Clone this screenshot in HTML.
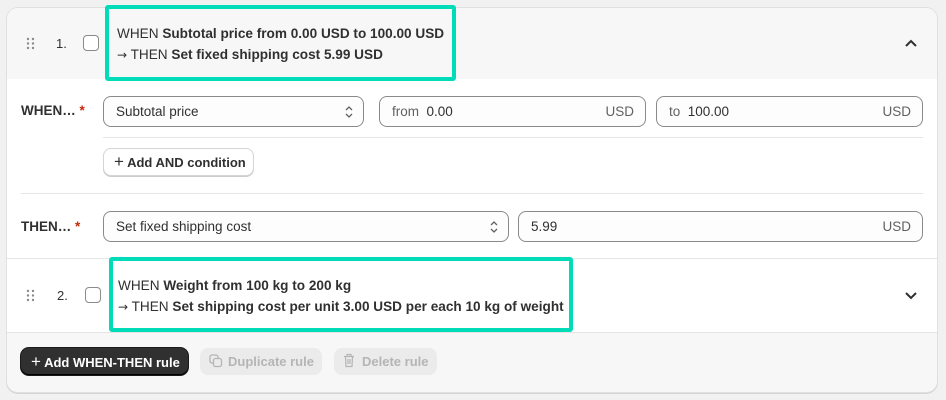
<!DOCTYPE html>
<html><head><meta charset="utf-8"><style>
*{box-sizing:border-box;margin:0;padding:0}
body{width:946px;height:400px;background:#f1f1f1;font-family:"Liberation Sans",sans-serif;font-size:13.5px;color:#303030;position:relative;overflow:hidden}
.a{position:absolute}
.card{left:6px;top:7px;width:932px;height:386px;border:1px solid #e0e0e0;border-radius:12px;background:#fff;overflow:hidden;box-shadow:0 1px 0 #d4d4d4}
.hdr{left:0;top:0;width:932px;height:71px;background:#f7f7f7}
.ftr{left:0;top:324px;width:932px;height:62px;background:#f7f7f7;border-top:1px solid #e3e3e3}
.inp{border:1px solid #8a8a8a;border-radius:8px;height:31px;background:#fdfdfd;line-height:29px;padding-left:12px;font-size:13.5px;color:#303030}
.usd{position:absolute;right:11px;top:0;color:#616161}
.gray{color:#616161}
.cb{width:16px;height:16px;border:1px solid #8a8a8a;border-radius:4px;background:#fff}
.teal{border:4px solid #00dcb8;border-radius:3px}
.ln{line-height:21px;font-size:13.6px;color:#303030;white-space:nowrap}
.ar{font-family:"DejaVu Sans",sans-serif;font-size:12px}
b{font-weight:700}
.hr{height:1px;background:#e6e6e6}
</style></head><body>
<div class="a card">
  <div class="a hdr"></div>
  <div class="a ftr"></div>
</div>
<svg class="a" style="left:26px;top:37px" width="10" height="13"><g fill="#8a8a8a"><circle cx="2" cy="2" r="1.2"/><circle cx="7" cy="2" r="1.2"/><circle cx="2" cy="6.5" r="1.2"/><circle cx="7" cy="6.5" r="1.2"/><circle cx="2" cy="11" r="1.2"/><circle cx="7" cy="11" r="1.2"/></g></svg>
<div class="a" style="left:56px;top:36px;font-size:13px">1.</div>
<div class="a cb" style="left:83px;top:35px"></div>
<div class="a teal" style="left:105px;top:5px;width:351px;height:76px;background:#f7f7f7"></div>
<div class="a ln" style="left:117px;top:23px">WHEN <b>Subtotal price from 0.00 USD to 100.00 USD</b><br><span class="ar">→</span> THEN <b>Set fixed shipping cost 5.99 USD</b></div>
<svg class="a" style="left:904px;top:38px" width="14" height="10"><path d="M2 8L7 3L12 8" fill="none" stroke="#303030" stroke-width="2"/></svg>

<div class="a" style="left:21px;top:103px;font-weight:700">WHEN… <span style="color:#c5280c">*</span></div>
<div class="a inp" style="left:103px;top:96px;width:261px">Subtotal price
<svg class="a" style="right:9px;top:8px" width="10" height="14"><path d="M2 5L5 2L8 5M2 9L5 12L8 9" fill="none" stroke="#616161" stroke-width="1.3"/></svg></div>
<div class="a inp" style="left:379px;top:96px;width:267px"><span class="gray">from</span>&nbsp; 0.00<span class="usd">USD</span></div>
<div class="a inp" style="left:656px;top:96px;width:267px"><span class="gray">to</span>&nbsp; 100.00<span class="usd">USD</span></div>
<div class="a hr" style="left:103px;top:137px;width:820px"></div>
<div class="a" style="left:103px;top:148px;width:151px;height:28px;border:1px solid #d4d4d4;border-radius:8px;background:#fff;box-shadow:0 1px 0 #ccc;font-weight:700;font-size:13px;line-height:26px;padding-left:10px;white-space:nowrap"><span style="font-size:17px;font-weight:400">+</span> Add AND condition</div>
<div class="a hr" style="left:21px;top:193px;width:902px"></div>

<div class="a" style="left:21px;top:219px;font-weight:700">THEN… <span style="color:#c5280c">*</span></div>
<div class="a inp" style="left:103px;top:211px;width:406px">Set fixed shipping cost
<svg class="a" style="right:9px;top:8px" width="10" height="14"><path d="M2 5L5 2L8 5M2 9L5 12L8 9" fill="none" stroke="#616161" stroke-width="1.3"/></svg></div>
<div class="a inp" style="left:518px;top:211px;width:405px">5.99<span class="usd">USD</span></div>
<div class="a hr" style="left:7px;top:258px;width:930px"></div>

<svg class="a" style="left:26px;top:289px" width="10" height="13"><g fill="#8a8a8a"><circle cx="2" cy="2" r="1.2"/><circle cx="7" cy="2" r="1.2"/><circle cx="2" cy="6.5" r="1.2"/><circle cx="7" cy="6.5" r="1.2"/><circle cx="2" cy="11" r="1.2"/><circle cx="7" cy="11" r="1.2"/></g></svg>
<div class="a" style="left:57px;top:288px;font-size:13px">2.</div>
<div class="a cb" style="left:85px;top:287px"></div>
<div class="a teal" style="left:109px;top:257px;width:464px;height:75px;background:#fff"></div>
<div class="a ln" style="left:118px;top:275px">WHEN <b>Weight from 100 kg to 200 kg</b><br><span class="ar">→</span> THEN <b>Set shipping cost per unit 3.00 USD per each 10 kg of weight</b></div>
<svg class="a" style="left:904px;top:291px" width="14" height="10"><path d="M2 2L7 7L12 2" fill="none" stroke="#303030" stroke-width="2"/></svg>

<div class="a" style="left:21px;top:348px;width:167px;height:27px;background:#303030;border-radius:8px;color:#fff;font-weight:700;font-size:13px;line-height:27px;padding-left:10px;white-space:nowrap;box-shadow:inset 0 -1px 0 #000,0 0 0 1px #1a1a1a"><span style="font-size:17px;font-weight:400">+</span> Add WHEN-THEN rule</div>
<div class="a" style="left:200px;top:348px;width:122px;height:27px;background:#ebebeb;border-radius:8px;color:#b5b5b5;font-weight:700;font-size:13px;line-height:27px;padding-left:28px;white-space:nowrap">Duplicate rule</div>
<svg class="a" style="left:209px;top:354px" width="14" height="14"><rect x="1" y="1" width="8" height="8" rx="2" fill="none" stroke="#b5b5b5" stroke-width="1.3"/><rect x="4.5" y="4.5" width="8" height="8" rx="2" fill="#ebebeb" stroke="#b5b5b5" stroke-width="1.3"/></svg>
<div class="a" style="left:334px;top:348px;width:103px;height:27px;background:#ebebeb;border-radius:8px;color:#b5b5b5;font-weight:700;font-size:13px;line-height:27px;padding-left:28px;white-space:nowrap">Delete rule</div>
<svg class="a" style="left:343px;top:353px" width="12" height="15"><path d="M1 3.5H11M4 3.5V1.5H8V3.5M2.5 3.5L3 13.5H9L9.5 3.5M5 6V11M7 6V11" fill="none" stroke="#b5b5b5" stroke-width="1.2"/></svg>
</body></html>
